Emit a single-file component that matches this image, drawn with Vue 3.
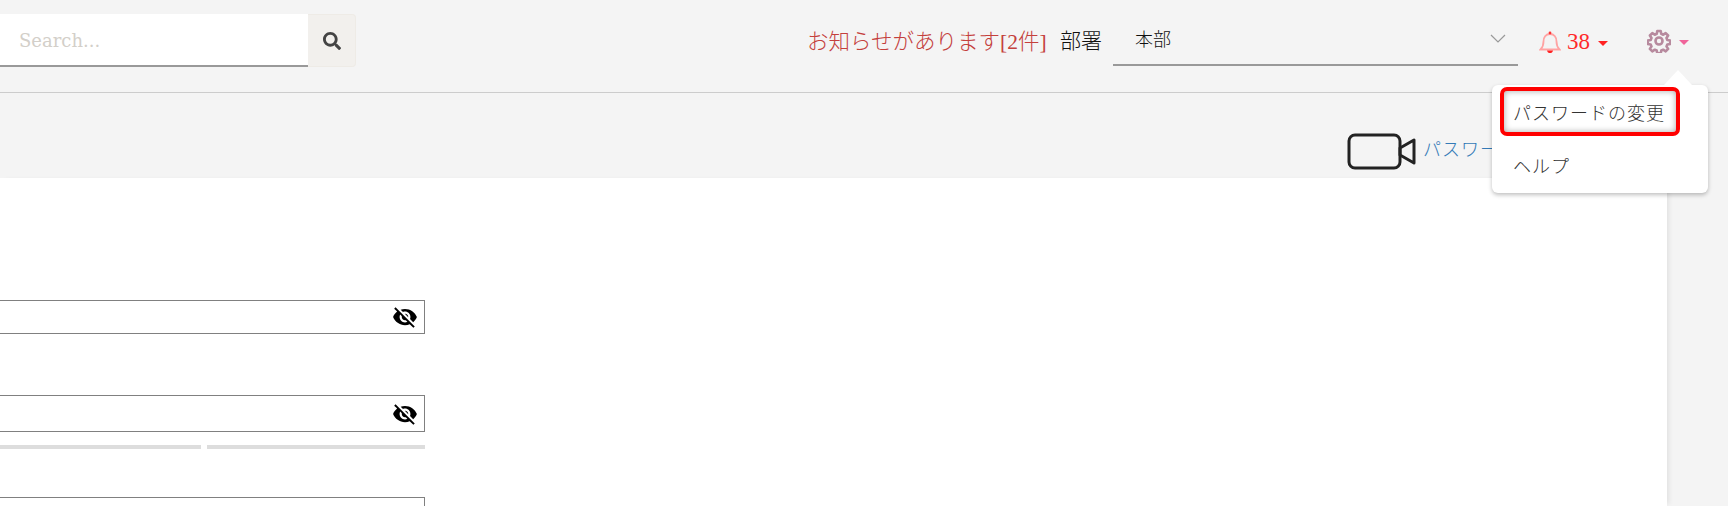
<template>
  <div class="page">
    <header class="topbar">
      <div class="search">
        <input class="search-input" type="text" placeholder="Search..." />
        <button class="search-btn" type="button">
          <svg width="18" height="18" viewBox="0 0 512 512"><path fill="#444" d="M505 442.7L405.3 343c-4.5-4.5-10.6-7-17-7H372c27.6-35.3 44-79.7 44-128C416 93.1 322.9 0 208 0S0 93.1 0 208s93.1 208 208 208c48.3 0 92.7-16.4 128-44v16.3c0 6.4 2.5 12.5 7 17l99.7 99.7c9.4 9.4 24.6 9.4 33.9 0l28.3-28.3c9.4-9.4 9.4-24.6.1-34zM208 336c-70.7 0-128-57.2-128-128 0-70.7 57.2-128 128-128 70.7 0 128 57.2 128 128 0 70.7-57.2 128-128 128z"/></svg>
        </button>
      </div>
      <div class="notice">お知らせがあります[2件]</div>
      <div class="dept-label">部署</div>
      <div class="dept-select">
        <span>本部</span>
        <svg width="16" height="9" viewBox="0 0 16 9"><path d="M1 1l7 7 7-7" fill="none" stroke="#999" stroke-width="1.2"/></svg>
      </div>
      <div class="bell">
        <svg width="22" height="24" viewBox="0 0 22 24">
          <path d="M1.500 19.500c2-2 3-4 3-8C4.500 7 7 4 11 4s6.500 3 6.500 7.500c0 4 1 6 3 8z" fill="none" stroke="#ffa3a3" stroke-width="1.800"/>
          <circle cx="11" cy="3" r="1.400" fill="#f33"/>
          <path d="M8 20.500h6c-.5 2-1.500 2.500-3 2.500s-2.500-.5-3-2.500z" fill="#f22"/>
        </svg>
        <span class="bell-count">38</span>
        <i class="caret caret-red"></i>
      </div>
      <div class="gear">
        <svg width="24" height="24" viewBox="0 0 24 24" fill="none" stroke="#b78a9e" stroke-width="2.600" stroke-linejoin="round">
          <circle cx="12" cy="12" r="3.500"/>
          <path d="M10.300 2h3.400l.6 2.900 1.900.8 2.500-1.600 2.400 2.400-1.600 2.500.8 1.900 2.900.6v3.400l-2.900.6-.8 1.900 1.600 2.500-2.400 2.400-2.500-1.600-1.900.8-.6 2.900h-3.400l-.6-2.900-1.900-.8-2.500 1.600-2.400-2.400 1.600-2.500-.8-1.900-2.900-.6v-3.400l2.900-.6.8-1.900-1.600-2.500 2.400-2.400 2.500 1.600 1.900-.8z"/>
        </svg>
        <i class="caret caret-pink"></i>
      </div>
      <div class="menu">
        <div class="menu-item menu-item-active">パスワードの変更</div>
        <div class="menu-item">ヘルプ</div>
      </div>
    </header>

    <div class="subbar">
      <svg class="camera" width="70" height="38" viewBox="0 0 70 38" fill="none" stroke="#222" stroke-width="3" stroke-linejoin="round">
        <rect x="2" y="2" width="51" height="33" rx="6"/>
        <path d="M53 15l14-8v23l-14-8z"/>
      </svg>
      <a class="video-link">パスワード</a>
    </div>

    <div class="body-row">
      <main class="panel">
        <div v-for="(field, i) in fields" :key="i" class="field" :class="field.cls">
          <div class="pw-input">
            <svg v-if="field.eye" width="26" height="26" viewBox="0 0 24 24"><path d="M12 7c2.760 0 5 2.240 5 5 0 .65-.13 1.260-.36 1.830l2.920 2.920c1.510-1.260 2.700-2.890 3.430-4.750-1.730-4.390-6-7.500-11-7.500-1.400 0-2.740.25-3.980.7l2.160 2.160C10.740 7.130 11.350 7 12 7zM2 4.270l2.280 2.280.46.46C3.080 8.300 1.780 10.020 1 12c1.730 4.390 6 7.500 11 7.500 1.550 0 3.030-.3 4.380-.84l.42.42L19.730 22 21 20.730 3.270 3 2 4.270zM7.530 9.800l1.550 1.550c-.05.21-.08.43-.08.65 0 1.660 1.340 3 3 3 .22 0 .44-.03.65-.08l1.550 1.550c-.67.33-1.410.53-2.200.53-2.760 0-5-2.240-5-5 0-.79.2-1.530.53-2.200zm4.310-.78l3.150 3.150.02-.16c0-1.660-1.340-3-3-3l-.17.01z"/></svg>
          </div>
          <div v-if="field.meter" class="meter"><span class="m1"></span><span class="m2"></span></div>
        </div>
      </main>
      <aside class="side"></aside>
    </div>
  </div>
</template>

<script setup>
const fields = [
  { cls: 'f1', eye: true },
  { cls: 'f2', eye: true, meter: true },
  { cls: 'f3' },
]
</script>

<style>
html, body { margin: 0; height: 506px; overflow: hidden; background: #f4f4f4; }
</style>

<style scoped>
.page {
  width: 1728px;
  height: 506px;
  overflow: hidden;
  background: #f4f4f4;
  font-family: "Liberation Serif", "Noto Sans CJK JP", serif;
  display: flex;
  flex-direction: column;
}
.topbar {
  position: relative;
  z-index: 2;
  height: 93px;
  box-sizing: border-box;
  flex: none;
  border-bottom: 1px solid #ccc;
  display: flex;
  align-items: flex-start;
}
.search { display: flex; margin-top: 14px; width: 356px; flex: none; }
.search-input {
  width: 308px;
  height: 53px;
  box-sizing: border-box;
  border: 0;
  border-bottom: 2px solid #999;
  background: #fff;
  padding: 2px 0 0 19px;
  font-family: "DejaVu Serif", serif;
  font-size: 18px;
  outline: none;
}
.search-input::placeholder { color: #d3cfc9; }
.search-btn {
  width: 48px;
  height: 53px;
  box-sizing: border-box;
  border: 1px solid #eeebe6;
  border-left: 0;
  border-radius: 0 4px 4px 0;
  background: #f2f0ed;
  display: flex;
  align-items: center;
  justify-content: center;
  padding: 0;
}
.notice {
  margin: 28px 0 0 451px;
  width: 253px;
  flex: none;
  color: #c4403c;
  font-size: 21.500px;
  line-height: 28px;
  font-weight: 300;
}
.dept-label {
  margin-top: 27px;
  width: 53px;
  flex: none;
  color: #111;
  font-size: 21px;
  line-height: 28px;
  font-weight: 300;
}
.dept-select {
  margin-top: 14px;
  width: 405px;
  height: 52px;
  flex: none;
  box-sizing: border-box;
  border-bottom: 2px solid #999;
  padding: 0 12px 2px 22px;
  display: flex;
  align-items: center;
  justify-content: space-between;
  font-size: 18px;
  font-weight: 300;
  color: #111;
}
.bell {
  margin: 30px 0 0 21px;
  width: 107px;
  flex: none;
  display: flex;
  align-items: center;
  color: #ff2a2a;
}
.bell-count { margin-left: 6px; font-size: 23px; line-height: 24px; }
.caret {
  display: block;
  width: 0;
  height: 0;
  border-left: 5px solid transparent;
  border-right: 5px solid transparent;
  margin-left: 8px;
  margin-top: 2px;
}
.caret-red { border-top: 5px solid #f22; }
.caret-pink { border-top: 5px solid #f0649a; }
.gear { margin: 29px 0 0 1px; display: flex; align-items: center; }
.menu {
  position: absolute;
  left: 1492px;
  top: 85px;
  width: 216px;
  height: 108px;
  box-sizing: border-box;
  background: #fff;
  border-radius: 6px;
  box-shadow: 0 2px 4px rgba(0, 0, 0, 0.25);
}
.menu::before {
  content: "";
  position: absolute;
  right: 16px;
  top: -15px;
  border-left: 14px solid transparent;
  border-right: 14px solid transparent;
  border-bottom: 15px solid #fff;
}
.menu-item {
  height: 53px;
  padding-left: 21px;
  display: flex;
  align-items: center;
  font-size: 18px;
  letter-spacing: 1px;
  font-weight: 300;
  color: #333;
}
.menu-item-active {
  position: absolute;
  left: 8px;
  top: 2px;
  width: 180px;
  height: 49px;
  box-sizing: border-box;
  padding-left: 9px;
  border: 4px solid #f00;
  border-radius: 7px;
  box-shadow: inset 0 0 6px rgba(0, 0, 0, 0.35);
}
.menu-item:last-child { margin-top: 53px; }
.subbar {
  height: 85px;
  flex: none;
  display: flex;
  align-items: flex-start;
  padding: 40px 0 0 1347px;
  box-sizing: border-box;
}
.video-link {
  margin: 2px 0 0 6px;
  color: #337ab7;
  font-size: 18px;
  letter-spacing: 1px;
  font-weight: 300;
  white-space: nowrap;
}
.body-row { flex: 1; display: flex; min-height: 0; }
.panel {
  width: 1667px;
  flex: none;
  background: #fff;
  box-shadow: 4px 0 5px -2px rgba(0, 0, 0, 0.08);
  box-sizing: border-box;
  padding-top: 122px;
}
.side { flex: 1; }
.field { width: 425px; }
.pw-input {
  box-sizing: border-box;
  height: 34px;
  border: 1px solid #808080;
  border-left: 0;
  display: flex;
  align-items: center;
  justify-content: flex-end;
  padding-right: 6px;
}
.f2 { margin-top: 61px; }
.f2 .pw-input { height: 37px; }
.f3 { margin-top: 48px; }
.meter { display: flex; gap: 6px; margin-top: 13px; }
.meter span { height: 4px; background: #ddd; }
.m1 { width: 201px; }
.m2 { width: 218px; }
</style>
